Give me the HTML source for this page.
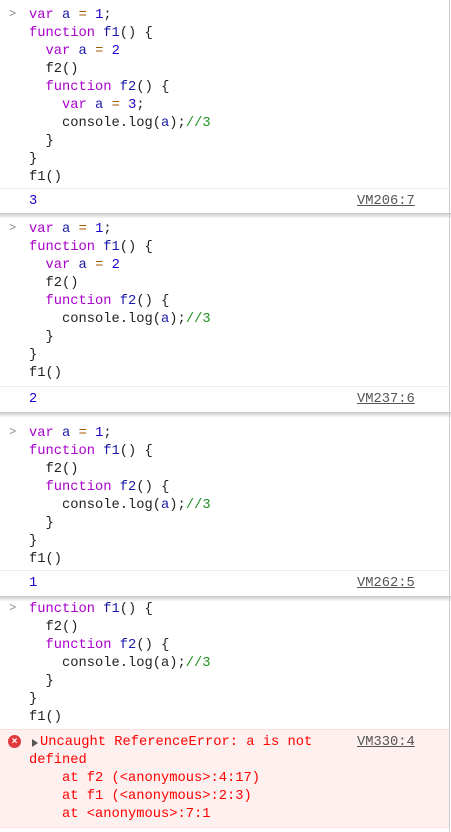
<!DOCTYPE html>
<html><head><meta charset="utf-8"><style>
body{margin:0;width:451px;height:832px;background:#fff;overflow:hidden;font-family:"Liberation Mono",monospace;font-size:13.75px;position:relative}
.l{position:absolute;left:29px;height:18px;line-height:18px;white-space:pre;color:#222}
.p{position:absolute;left:9px;color:#888;font-size:12px}
.sep{position:absolute;left:0;width:449px;height:1px;background:#eee}
.gap{position:absolute;left:0;width:451px;height:5px;background:linear-gradient(#c4c4c4,#ddd 40%,#f6f6f6)}
.k{color:#a0c}.n{color:#1c00cf}.v{color:#1a1aa6}.o{color:#a65a00}.c{color:#1f8f1f}
.vm{position:absolute;left:357px;color:#555;text-decoration:underline;height:18px;line-height:18px}
.err{position:absolute;left:0;top:729px;width:449px;height:97px;background:#fff0f0;border-top:1px solid #fdd;border-bottom:1px solid #fdd}
.e{color:#f00}
</style></head><body>
<div class="p" style="top:7px">&gt;</div>
<div class="l" style="top:7px"><span class="k">var</span> <span class="v">a</span> <span class="o">=</span> <span class="n">1</span>;</div>
<div class="l" style="top:25px"><span class="k">function</span> <span class="v">f1</span>() {</div>
<div class="l" style="top:43px">  <span class="k">var</span> <span class="v">a</span> <span class="o">=</span> <span class="n">2</span></div>
<div class="l" style="top:61px">  f2()</div>
<div class="l" style="top:79px">  <span class="k">function</span> <span class="v">f2</span>() {</div>
<div class="l" style="top:97px">    <span class="k">var</span> <span class="v">a</span> <span class="o">=</span> <span class="n">3</span>;</div>
<div class="l" style="top:115px">    console.log(<span class="v">a</span>);<span class="c">//3</span></div>
<div class="l" style="top:133px">  }</div>
<div class="l" style="top:151px">}</div>
<div class="l" style="top:169px">f1()</div>
<div class="sep" style="top:188px"></div>
<div class="l n" style="top:193px">3</div>
<div class="vm" style="top:193px">VM206:7</div>
<div class="gap" style="top:213px"></div>

<div class="p" style="top:221px">&gt;</div>
<div class="l" style="top:221px"><span class="k">var</span> <span class="v">a</span> <span class="o">=</span> <span class="n">1</span>;</div>
<div class="l" style="top:239px"><span class="k">function</span> <span class="v">f1</span>() {</div>
<div class="l" style="top:257px">  <span class="k">var</span> <span class="v">a</span> <span class="o">=</span> <span class="n">2</span></div>
<div class="l" style="top:275px">  f2()</div>
<div class="l" style="top:293px">  <span class="k">function</span> <span class="v">f2</span>() {</div>
<div class="l" style="top:311px">    console.log(<span class="v">a</span>);<span class="c">//3</span></div>
<div class="l" style="top:329px">  }</div>
<div class="l" style="top:347px">}</div>
<div class="l" style="top:365px">f1()</div>
<div class="sep" style="top:386px"></div>
<div class="l n" style="top:391px">2</div>
<div class="vm" style="top:391px">VM237:6</div>
<div class="gap" style="top:412px"></div>

<div class="p" style="top:425px">&gt;</div>
<div class="l" style="top:425px"><span class="k">var</span> <span class="v">a</span> <span class="o">=</span> <span class="n">1</span>;</div>
<div class="l" style="top:443px"><span class="k">function</span> <span class="v">f1</span>() {</div>
<div class="l" style="top:461px">  f2()</div>
<div class="l" style="top:479px">  <span class="k">function</span> <span class="v">f2</span>() {</div>
<div class="l" style="top:497px">    console.log(<span class="v">a</span>);<span class="c">//3</span></div>
<div class="l" style="top:515px">  }</div>
<div class="l" style="top:533px">}</div>
<div class="l" style="top:551px">f1()</div>
<div class="sep" style="top:570px"></div>
<div class="l n" style="top:575px">1</div>
<div class="vm" style="top:575px">VM262:5</div>
<div class="gap" style="top:596px"></div>

<div class="p" style="top:601px">&gt;</div>
<div class="l" style="top:601px"><span class="k">function</span> <span class="v">f1</span>() {</div>
<div class="l" style="top:619px">  f2()</div>
<div class="l" style="top:637px">  <span class="k">function</span> <span class="v">f2</span>() {</div>
<div class="l" style="top:655px">    console.log(a);<span class="c">//3</span></div>
<div class="l" style="top:673px">  }</div>
<div class="l" style="top:691px">}</div>
<div class="l" style="top:709px">f1()</div>
<div class="err"></div>
<div style="position:absolute;left:8px;top:735px;width:13px;height:13px;border-radius:50%;background:#e0393e;color:#fff;font:bold 10px/13px 'Liberation Sans',sans-serif;text-align:center">×</div>
<div style="position:absolute;left:32px;top:739px;width:0;height:0;border-left:6px solid #555;border-top:4px solid transparent;border-bottom:4px solid transparent"></div>
<div class="l e" style="left:40px;top:734px">Uncaught ReferenceError: a is not</div>
<div class="vm" style="top:734px">VM330:4</div>
<div class="l e" style="top:752px">defined</div>
<div class="l e" style="top:770px">    at f2 (&lt;anonymous&gt;:4:17)</div>
<div class="l e" style="top:788px">    at f1 (&lt;anonymous&gt;:2:3)</div>
<div class="l e" style="top:806px">    at &lt;anonymous&gt;:7:1</div>
<div style="position:absolute;left:449px;top:0;width:1px;height:832px;background:#ccc"></div>
</body></html>
